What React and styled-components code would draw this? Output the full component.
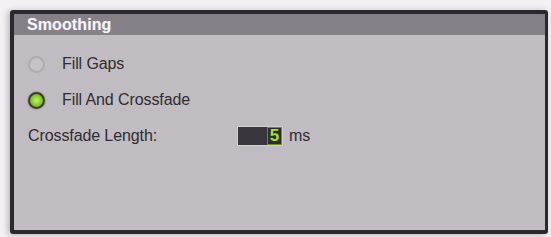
import React from 'react';
import styled, { createGlobalStyle } from 'styled-components';

const GlobalStyle = createGlobalStyle`
  html, body {
    margin: 0;
    padding: 0;
    background: #f3f1f3;
    font-family: "Liberation Sans", Arial, sans-serif;
  }
`;

const Page = styled.div`
  width: 551px;
  height: 237px;
  padding: 10px;
  box-sizing: border-box;
`;

const Panel = styled.div`
  width: 538px;
  height: 224px;
  box-sizing: border-box;
  border-style: solid;
  border-color: #2b292e;
  border-width: 4px 3px 4px 4px;
  border-radius: 3px;
  background: #c1bcc2;
  box-shadow: -2px 1px 6px rgba(0, 0, 0, 0.25);
  display: flex;
  flex-direction: column;
  overflow: hidden;
`;

const TitleBar = styled.div`
  height: 21px;
  background: #858087;
  display: flex;
  align-items: center;
  padding-left: 13px;
`;

const Title = styled.span`
  color: #f6f4f6;
  font-size: 16px;
  font-weight: bold;
  letter-spacing: 0.1px;
  text-shadow: 0 0 1px rgba(255, 255, 255, 0.3);
`;

const Body = styled.div`
  flex: 1;
  display: flex;
  flex-direction: column;
  padding: 11px 0 0 14px;
`;

const Row = styled.div`
  height: 36px;
  display: flex;
  align-items: center;
`;

const Radio = styled.span`
  width: 17px;
  height: 17px;
  margin-left: 0;
  margin-right: 17px;
  border-radius: 50%;
  box-sizing: border-box;
  border: 2px solid ${p => (p.checked ? '#3b3d2c' : '#aeaaaf')};
  background: ${p =>
    p.checked
      ? 'radial-gradient(circle at 50% 50%, #c4f06a 0, #8fd232 45%, #5e8e20 100%)'
      : '#c6c2c7'};
  box-shadow: ${p => (p.checked ? '0 0 2px rgba(40,50,20,0.6)' : 'none')};
`;

const Label = styled.span`
  font-size: 16px;
  color: #2f2d30;
  letter-spacing: -0.1px;
`;

const FieldLabel = styled(Label)`
  width: 209px;
`;

const NumberBox = styled.div`
  width: 46px;
  height: 20px;
  box-sizing: border-box;
  background: #38363a;
  border: 1px solid #d2ced3;
  display: flex;
  justify-content: flex-end;
  align-items: stretch;
`;

const NumberValue = styled.span`
  width: 13px;
  background: #2f2f2a;
  border: 1px solid #6e8a2c;
  color: #a6dc3a;
  font-size: 17px;
  font-weight: bold;
  line-height: 16px;
  text-align: center;
`;

const Unit = styled(Label)`
  margin-left: 6px;
`;

export default function App() {
  return (
    <Page>
      <GlobalStyle />
      <Panel>
        <TitleBar>
          <Title>Smoothing</Title>
        </TitleBar>
        <Body>
          <Row>
            <Radio />
            <Label>Fill Gaps</Label>
          </Row>
          <Row>
            <Radio checked />
            <Label>Fill And Crossfade</Label>
          </Row>
          <Row>
            <FieldLabel>Crossfade Length:</FieldLabel>
            <NumberBox>
              <NumberValue>5</NumberValue>
            </NumberBox>
            <Unit>ms</Unit>
          </Row>
        </Body>
      </Panel>
    </Page>
  );
}
